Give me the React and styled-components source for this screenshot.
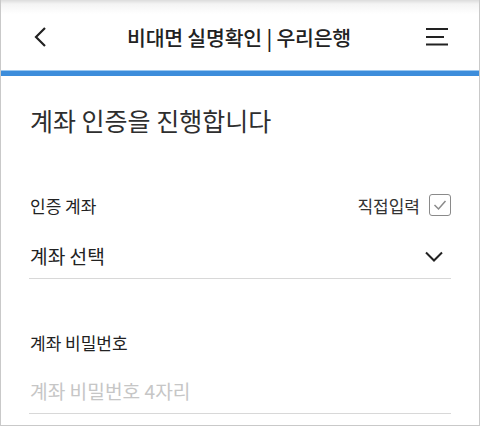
import styled, { createGlobalStyle } from "styled-components";

const GlobalStyle = createGlobalStyle`
  html, body {
    margin: 0;
    padding: 0;
    background: #ffffff;
  }
  body {
    font-family: "Noto Sans CJK KR", "Noto Sans", sans-serif;
  }
`;

const Page = styled.div`
  width: 480px;
  height: 426px;
  box-sizing: border-box;
  border: 1px solid #c9c9c9;
  border-top: none;
  background: #fff;
  overflow: hidden;
`;

const Header = styled.header`
  height: 70px;
  display: flex;
  align-items: center;
  justify-content: space-between;
  padding: 0 28px 0 26px;
  box-sizing: border-box;
  background: linear-gradient(#dcdcdc 0px, #f4f4f4 4px, #ffffff 14px);
`;

const IconButton = styled.button`
  width: 28px;
  height: 28px;
  border: none;
  background: none;
  padding: 0;
  display: flex;
  align-items: center;
  justify-content: center;
  margin-top: 4px;
`;

const HeaderTitle = styled.h1`
  margin: 3px 0 0;
  font-size: 20.5px;
  font-weight: 500;
  color: #222;
  letter-spacing: -0.2px;
`;

const ProgressBar = styled.div`
  height: 5px;
  background: #3d8ddb;
  border-top: 1px solid #9cc8f0;
`;

const Content = styled.main`
  padding: 26px 28px 0;
`;

const Heading = styled.h2`
  margin: 0 0 55px 1px;
  font-size: 25px;
  line-height: 36px;
  font-weight: 400;
  color: #2e2e2e;
`;

const Field = styled.div`
  margin-bottom: ${(p) => p.$gap || 0}px;
`;

const LabelRow = styled.div`
  display: flex;
  align-items: center;
  justify-content: space-between;
  height: 24px;
  padding-left: 1px;
`;

const Label = styled.span`
  font-size: 17px;
  color: #222;
`;

const DirectInput = styled.label`
  display: flex;
  align-items: center;
  gap: 9px;
  font-size: 17px;
  color: #333;
`;

const CheckBox = styled.span`
  width: 20px;
  height: 20px;
  border: 1.5px solid #8a8a8a;
  border-radius: 3px;
  display: flex;
  align-items: center;
  justify-content: center;
`;

const InputRow = styled.div`
  display: flex;
  align-items: center;
  justify-content: space-between;
  height: 44px;
  margin-top: ${(p) => p.$offset}px;
  padding: 0 8px 0 1px;
  border-bottom: 1px solid #d8d8d8;
  font-size: 19.2px;
  color: ${(p) => (p.$placeholder ? "#c6c6c6" : "#222")};
`;

const App = () => {
  return (
    <Page>
      <GlobalStyle />
      <Header>
        <IconButton aria-label="뒤로">
          <svg width="16" height="22" viewBox="0 0 16 22">
            <path d="M12 2 L3 11 L12 20" fill="none" stroke="#222" strokeWidth="2.2" />
          </svg>
        </IconButton>
        <HeaderTitle>비대면 실명확인 | 우리은행</HeaderTitle>
        <IconButton aria-label="메뉴">
          <svg width="24" height="20" viewBox="0 0 24 20">
            <path d="M1 2 H23 M1 10 H19 M1 17.5 H23" stroke="#222" strokeWidth="2.2" />
          </svg>
        </IconButton>
      </Header>
      <ProgressBar />
      <Content>
        <Heading>계좌 인증을 진행합니다</Heading>
        <Field $gap={51}>
          <LabelRow>
            <Label>인증 계좌</Label>
            <DirectInput>
              직접입력
              <CheckBox>
                <svg width="14" height="12" viewBox="0 0 14 12">
                  <path d="M1.5 6 L5.5 10 L12.5 2" fill="none" stroke="#8a8a8a" strokeWidth="1.5" />
                </svg>
              </CheckBox>
            </DirectInput>
          </LabelRow>
          <InputRow $offset={17}>
            계좌 선택
            <svg width="18" height="11" viewBox="0 0 18 11">
              <path d="M1 1.5 L9 9.5 L17 1.5" fill="none" stroke="#222" strokeWidth="2" />
            </svg>
          </InputRow>
        </Field>
        <Field>
          <LabelRow>
            <Label>계좌 비밀번호</Label>
          </LabelRow>
          <InputRow $offset={15} $placeholder>
            계좌 비밀번호 4자리
          </InputRow>
        </Field>
      </Content>
    </Page>
  );
};

export default App;
